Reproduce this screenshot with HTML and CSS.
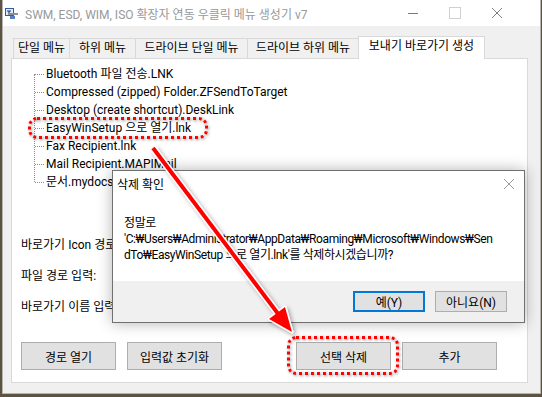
FILE: index.html
```html
<!DOCTYPE html>
<html lang="ko">
<head>
    <meta charset="UTF-8">
    <meta name="viewport" content="width=device-width, initial-scale=1.0">
    <title>SWM, ESD, WIM, ISO 확장자 연동 우클릭 메뉴 생성기 v7</title>
    <link rel="stylesheet" href="styles.css">
</head>
<body>
    <div class="window">
        <div class="titlebar">
            <svg class="app-icon" width="13" height="11" viewBox="0 0 13 11">
                <rect x="0.5" y="0.5" width="8" height="7" fill="#dfe9f7" stroke="#2d5ca6"/>
                <path d="M2 3h4M4 3v4" stroke="#1b3f7a" stroke-width="1.2"/>
                <rect x="3" y="5" width="10" height="2" fill="#8a8f99"/>
                <rect x="5" y="8" width="5" height="3" fill="#5a7fc0"/>
            </svg>
            <span class="title">SWM, ESD, WIM, ISO 확장자 연동 우클릭 메뉴 생성기 v7</span>
            <div class="controls">
                <span class="ctl ctl-min"></span>
                <span class="ctl ctl-max"></span>
                <span class="ctl">
                    <svg width="10" height="10" viewBox="0 0 10 10"><path d="M0 0L10 10M10 0L0 10" stroke="#808080" stroke-width="1"/></svg>
                </span>
            </div>
        </div>

        <div class="tabs">
            <div class="tab tab-single">단일 메뉴</div>
            <div class="tab tab-sub">하위 메뉴</div>
            <div class="tab tab-drive-single">드라이브 단일 메뉴</div>
            <div class="tab tab-drive-sub">드라이브 하위 메뉴</div>
            <div class="tab tab-sendto active">보내기 바로가기 생성</div>
        </div>

        <div class="panel">
            <ul class="tree">
                <li>Bluetooth 파일 전송.LNK</li>
                <li>Compressed (zipped) Folder.ZFSendToTarget</li>
                <li>Desktop (create shortcut).DeskLink</li>
                <li>EasyWinSetup 으로 열기.lnk</li>
                <li>Fax Recipient.lnk</li>
                <li>Mail Recipient.MAPIMail</li>
                <li>문서.mydocs</li>
            </ul>

            <div class="form">
                <div class="form-row"><label>바로가기 Icon 경로:</label><input type="text"></div>
                <div class="form-row"><label>파일 경로 입력:</label><input type="text"></div>
                <div class="form-row"><label>바로가기 이름 입력:</label><input type="text"></div>
            </div>

            <div class="buttons">
                <button class="btn">경로 열기</button>
                <button class="btn">입력값 초기화</button>
                <button class="btn btn-push">선택 삭제</button>
                <button class="btn">추가</button>
            </div>
        </div>
    </div>

    <!-- message box on top of the main window -->
    <div class="dialog">
        <div class="dlg-title">
            <span>삭제 확인</span>
            <svg class="dlg-close" width="10" height="10" viewBox="0 0 10 10"><path d="M0 0L10 10M10 0L0 10" stroke="#9a9a9a" stroke-width="1"/></svg>
        </div>
        <div class="dlg-body">
            <p>정말로<br>'C:₩Users₩Administrator₩AppData₩Roaming₩Microsoft₩Windows₩Sen<br>dTo₩EasyWinSetup 으로 열기.lnk'를 삭제하시겠습니까?</p>
        </div>
        <div class="dlg-footer">
            <button class="dlg-btn default">예(Y)</button>
            <button class="dlg-btn">아니요(N)</button>
        </div>
    </div>

    <!-- red annotations -->
    <div class="mark mark-item"></div>
    <div class="mark mark-button"></div>
    <svg class="arrow" width="542" height="397" viewBox="0 0 542 397">
        <defs>
            <filter id="shade" x="-20%" y="-20%" width="140%" height="140%">
                <feDropShadow dx="2" dy="2" stdDeviation="2" flood-color="#000" flood-opacity="0.35"/>
            </filter>
        </defs>
        <g filter="url(#shade)">
            <line x1="153" y1="148" x2="279" y2="315" stroke="#fff" stroke-width="7"/>
            <polygon points="292,332 269,319 285,307" fill="#fff" stroke="#fff" stroke-width="3" stroke-linejoin="round"/>
            <line x1="153" y1="148" x2="279" y2="315" stroke="#f00" stroke-width="4"/>
            <polygon points="292,332 269,319 285,307" fill="#f00"/>
        </g>
    </svg>
</body>
</html>
```

FILE: styles.css
```css
* {
    box-sizing: border-box;
}
html, body {
    margin: 0;
}
body {
    position: relative;
    width: 542px;
    height: 397px;
    padding: 0 1px 3px 2px;
    background-color: #5c5440;
    font-family: Roboto, "Noto Sans", "Noto Sans CJK KR", sans-serif;
    font-size: 12px;
    color: #000;
    overflow: hidden;
}
.window {
    display: flex;
    flex-direction: column;
    height: 100%;
    background: #f0f0f0;
    border: 1px solid #b4b4b4;
    border-top: none;
}
.titlebar {
    display: flex;
    align-items: center;
    flex: none;
    height: 26px;
    background: #fff;
}
.app-icon {
    margin-left: 2px;
}
.title {
    margin-left: 7px;
    color: #999;
    white-space: nowrap;
}
.controls {
    display: flex;
    margin-left: auto;
    margin-right: 22px;
}
.ctl {
    width: 42px;
    height: 26px;
    display: flex;
    align-items: center;
    justify-content: center;
}
.ctl-min::before {
    content: "";
    width: 10px;
    border-top: 1px solid #7a7a7a;
}
.ctl-max::before {
    content: "";
    width: 10px;
    height: 10px;
    border: 1px solid #d0d0d0;
}
.tabs {
    position: relative;
    z-index: 1;
    display: flex;
    align-items: flex-end;
    flex: none;
    height: 32px;
    padding-left: 10px;
}
.tab {
    height: 20px;
    line-height: 18px;
    text-align: center;
    border: 1px solid #d9d9d9;
    border-bottom: none;
    background: #f0f0f0;
    margin-right: -1px;
    white-space: nowrap;
}
.tab-single { width: 57px; }
.tab-sub { width: 67px; }
.tab-drive-single { width: 113px; }
.tab-drive-sub { width: 112px; }
.tab-sendto { width: 127px; }
.tab.active {
    height: 23px;
    margin-bottom: -1px;
    line-height: 19px;
    background: #fff;
}
.panel {
    flex: none;
    display: flex;
    flex-direction: column;
    width: 517px;
    height: 325px;
    margin-left: 8px;
    border: 1px solid #d9d9d9;
    background: #fff;
}
.tree {
    position: relative;
    list-style: none;
    margin: 6px 0 0 22px;
    padding: 0;
}
.tree::before {
    content: "";
    position: absolute;
    left: 0;
    top: 9px;
    bottom: 9px;
    border-left: 1px dotted #8c8c8c;
}
.tree li {
    position: relative;
    height: 18px;
    line-height: 18px;
    padding-left: 12px;
    white-space: nowrap;
}
.tree li::before {
    content: "";
    position: absolute;
    left: 1px;
    top: 9px;
    width: 9px;
    border-top: 1px dotted #8c8c8c;
}
.form {
    margin-top: 37px;
    padding-left: 9px;
}
.form-row {
    display: flex;
    align-items: center;
    height: 31px;
}
.form-row label {
    width: 91px;
    overflow: hidden;
    white-space: nowrap;
}
.form-row input {
    width: 370px;
    height: 21px;
    margin-left: 29px;
    border: 1px solid #7a7a7a;
}
.buttons {
    display: flex;
    gap: 11px;
    margin-top: 21px;
    padding: 0 30px 0 9px;
}
.btn {
    width: 95px;
    height: 28px;
    padding: 0;
    background: #e1e1e1;
    border: 1px solid #adadad;
    font: inherit;
    color: #000;
}
.btn-push {
    margin-left: auto;
}

/* message box */
.dialog {
    position: absolute;
    left: 112px;
    top: 170px;
    width: 413px;
    height: 153px;
    display: flex;
    flex-direction: column;
    background: #fff;
    border: 1px solid #707070;
    box-shadow: 0 0 14px rgba(0, 0, 0, 0.3);
}
.dlg-title {
    display: flex;
    align-items: center;
    justify-content: space-between;
    height: 25px;
    padding: 0 10px 0 4px;
}
.dlg-body {
    flex: 1;
    padding: 19px 11px 0;
}
.dlg-body p {
    margin: 0;
    line-height: 16px;
    letter-spacing: -0.4px;
    white-space: nowrap;
}
.dlg-footer {
    display: flex;
    justify-content: flex-end;
    gap: 10px;
    height: 41px;
    padding: 10px 17px 0 0;
    background: #f0f0f0;
}
.dlg-btn {
    width: 72px;
    height: 21px;
    padding: 0;
    background: #e1e1e1;
    border: 1px solid #adadad;
    font: inherit;
    color: #000;
}
.dlg-btn.default {
    border: 2px solid #0078d7;
}

/* annotations */
.mark {
    position: absolute;
    border: 3px dotted #f00;
    border-radius: 9px;
    filter: drop-shadow(1px 1px 1.5px rgba(0, 0, 0, 0.45));
}
.mark-item {
    left: 28px;
    top: 117px;
    width: 180px;
    height: 22px;
}
.mark-button {
    left: 287px;
    top: 336px;
    width: 112px;
    height: 39px;
}
.arrow {
    position: absolute;
    left: 0;
    top: 0;
    pointer-events: none;
}
```
